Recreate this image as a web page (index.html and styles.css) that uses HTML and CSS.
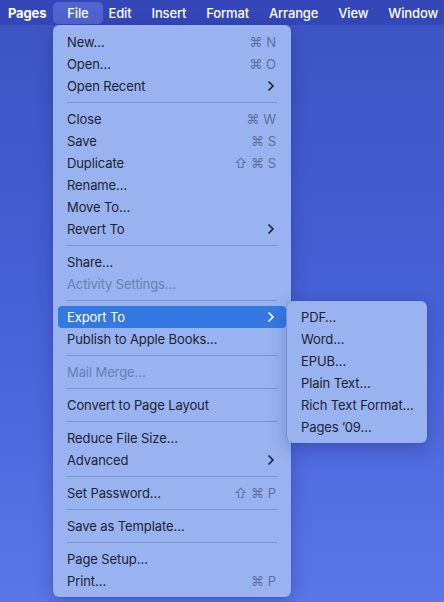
FILE: index.html
```html
<!DOCTYPE html>
<html>
<head>
<meta charset="utf-8">
<link rel="stylesheet" href="styles.css">
</head>
<body>
<div class="desktop">
  <nav class="menubar">
    <span class="mb-item app">Pages</span>
    <span class="mb-item active">File</span>
    <span class="mb-item">Edit</span>
    <span class="mb-item">Insert</span>
    <span class="mb-item">Format</span>
    <span class="mb-item">Arrange</span>
    <span class="mb-item">View</span>
    <span class="mb-item">Window</span>
  </nav>

  <div class="menu file-menu">
    <div class="row"><span>New…</span><span class="kbd">⌘ N</span></div>
    <div class="row"><span>Open…</span><span class="kbd">⌘ O</span></div>
    <div class="row"><span>Open Recent</span><svg class="chev" viewBox="0 0 6 10"><path d="M1 1l4 4-4 4"/></svg></div>
    <div class="sep"></div>
    <div class="row"><span>Close</span><span class="kbd">⌘ W</span></div>
    <div class="row"><span>Save</span><span class="kbd">⌘ S</span></div>
    <div class="row"><span>Duplicate</span><span class="kbd">⇧ ⌘ S</span></div>
    <div class="row"><span>Rename…</span></div>
    <div class="row"><span>Move To…</span></div>
    <div class="row"><span>Revert To</span><svg class="chev" viewBox="0 0 6 10"><path d="M1 1l4 4-4 4"/></svg></div>
    <div class="sep"></div>
    <div class="row"><span>Share…</span></div>
    <div class="row disabled"><span>Activity Settings…</span></div>
    <div class="sep"></div>
    <div class="row selected"><span>Export To</span><svg class="chev" viewBox="0 0 6 10"><path d="M1 1l4 4-4 4"/></svg></div>
    <div class="row"><span>Publish to Apple Books…</span></div>
    <div class="sep"></div>
    <div class="row disabled"><span>Mail Merge…</span></div>
    <div class="sep"></div>
    <div class="row"><span>Convert to Page Layout</span></div>
    <div class="sep"></div>
    <div class="row"><span>Reduce File Size…</span></div>
    <div class="row"><span>Advanced</span><svg class="chev" viewBox="0 0 6 10"><path d="M1 1l4 4-4 4"/></svg></div>
    <div class="sep"></div>
    <div class="row"><span>Set Password…</span><span class="kbd">⇧ ⌘ P</span></div>
    <div class="sep"></div>
    <div class="row"><span>Save as Template…</span></div>
    <div class="sep"></div>
    <div class="row"><span>Page Setup…</span></div>
    <div class="row"><span>Print…</span><span class="kbd">⌘ P</span></div>
  </div>

  <div class="menu sub-menu">
    <div class="row"><span>PDF…</span></div>
    <div class="row"><span>Word…</span></div>
    <div class="row"><span>EPUB…</span></div>
    <div class="row"><span>Plain Text…</span></div>
    <div class="row"><span>Rich Text Format…</span></div>
    <div class="row"><span>Pages ’09…</span></div>
  </div>
</div>
</body>
</html>
```

FILE: styles.css
```css
* { box-sizing: border-box; }
html, body { margin: 0; padding: 0; }
body {
  width: 444px;
  height: 602px;
  overflow: hidden;
  font-family: Inter, "Noto Sans", "DejaVu Sans", sans-serif;
}
.desktop {
  position: relative;
  width: 444px;
  height: 602px;
  background: linear-gradient(180deg, #3d54c2 0%, #4660d6 50%, #5a76e8 100%);
}
.menubar {
  height: 25px;
  background: #3447b8;
  display: flex;
  align-items: center;
  padding-left: 8px;
  color: #fff;
  font-size: 13px;
  font-weight: 500;
  letter-spacing: -0.15px;
}
.mb-item {
  padding: 0 10px;
  height: 22px;
  line-height: 22px;
  border-radius: 5px;
  white-space: nowrap;
}
.mb-item.app {
  font-weight: 700;
  padding-left: 0;
  padding-right: 7px;
}
.mb-item.active {
  background: #5064cf;
  padding: 0 14px;
  margin: 0 -4px 0 0;
}
.menu {
  position: absolute;
  background: #98b3ef;
  border-radius: 6px;
  box-shadow: 0 0 0 0.5px rgba(40, 60, 140, 0.35), 0 6px 18px rgba(10, 20, 80, 0.25);
  color: #1d2233;
  font-size: 13px;
  letter-spacing: -0.1px;
}
.file-menu {
  left: 53px;
  top: 25px;
  width: 238px;
  padding: 6px 5px 5px;
}
.sub-menu {
  left: 287px;
  top: 301px;
  width: 140px;
  padding: 5px 5px;
}
.row {
  height: 22px;
  display: flex;
  align-items: center;
  justify-content: space-between;
  padding: 0 10px 0 9px;
  border-radius: 4px;
  white-space: nowrap;
}
.row.disabled { color: #6a7eb4; }
.row.selected { background: #3479e2; color: #fff; }
.kbd {
  color: #5c6f9f;
  font-family: Inter, "DejaVu Sans", sans-serif;
  font-size: 13px;
  letter-spacing: 0;
}
.chev {
  width: 6px;
  height: 10px;
  fill: none;
  stroke: #1d2233;
  stroke-width: 1.7;
  stroke-linecap: round;
  stroke-linejoin: round;
  margin-right: 2px;
}
.row.selected .chev { stroke: #fff; }
.sep {
  height: 1px;
  margin: 5px 9px;
  background: #7d93cf;
}
```
